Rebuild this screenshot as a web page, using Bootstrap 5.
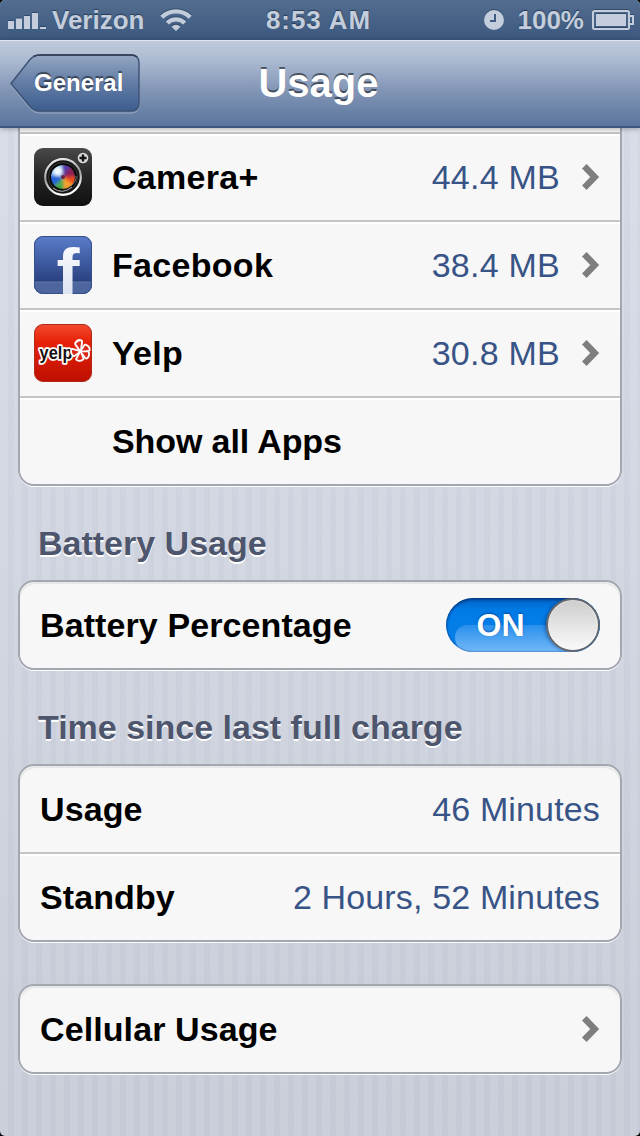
<!DOCTYPE html>
<html lang="en">
<head>
<meta charset="utf-8">
<meta name="viewport" content="width=device-width, initial-scale=1">
<title>Usage</title>
<link href="https://cdn.jsdelivr.net/npm/bootstrap@5.3.0/dist/css/bootstrap.min.css" rel="stylesheet">
<style>
html{background:#000}
body{font-family:"Liberation Sans",Arial,sans-serif;background:#000;overflow:hidden}
.phone{width:640px;height:1136px;border-radius:5px;overflow:hidden;
  background:repeating-linear-gradient(90deg,rgba(255,255,255,.05) 0 8px,rgba(120,135,165,.035) 8px 14px),linear-gradient(#d9dde8,#d0d4df 55%,#c7ccd7)}
.status{height:40px;background:linear-gradient(#526d8f,#3c587f);color:#c3cddb;font-size:26px;font-weight:700;line-height:40px;text-shadow:0 -1px 1px rgba(20,35,60,.65)}
.status svg,.titlebar svg,.cell svg{display:block;flex:none}
.status svg{filter:drop-shadow(0 -1px 0 rgba(20,35,60,.4))}
.side{width:200px}
.clock-text{letter-spacing:.9px;margin-right:3px}
.wifi{margin-left:16px}
.percent{margin:0 8px 0 13px}
.battery{margin-right:6px}
.titlebar{height:88px;padding:0 10px;border-top:1px solid #dfe6ef;border-bottom:2px solid #3d5982;background:linear-gradient(#bfcbdc,#a9b8d0 25%,#8295b6 58%,#5a759d);box-shadow:0 1px 5px rgba(0,0,0,.3);z-index:2}
.back{width:131px;height:60px}
.back span{left:24px;top:0;line-height:58px;font-size:24px;color:#fff;text-shadow:0 -2px 1px rgba(0,0,0,.5)}
.titletext{font-size:40px;line-height:84px;padding-right:3px;color:#fff;text-shadow:0 -2px 0 rgba(0,0,0,.5)}
.content-area{padding:0 18px;margin-top:-20px}
.group{border:2px solid #a3a7b0;border-radius:16px;overflow:hidden;background:#f7f7f7;box-shadow:0 1px 0 rgba(255,255,255,.9)}
.group>.cell{height:88px;padding:0 20px;background:#f7f7f7;border:0;border-top:2px solid #c5c5c7;color:#000;font-size:34px;line-height:40px;letter-spacing:.1px;box-shadow:inset 0 2px 0 #fff}
.group>.cell:first-child{height:86px;border-top:0;box-shadow:inset 0 2px 1px #e6e6e9}
.group>.cell.lead-in{height:22px;box-shadow:none}
.group>.cell.app{padding-left:14px}
.group>.cell.rest{padding-left:92px;letter-spacing:-.1px}
.name-app{margin-left:20px;letter-spacing:.3px}
.amount{color:#385487;letter-spacing:.15px}
.amount-app{margin-right:22px;letter-spacing:.25px}
.heading{height:94px;padding:20px 0 0 20px;line-height:74px;font-size:34px;color:#4d566d;text-shadow:0 2px 0 #fff}
.gap-block{height:42px}
.toggle{width:154px;height:54px;border-radius:27px;overflow:hidden;background:linear-gradient(#0064c8,#007be6 22%,#0a80e8)}
.toggle .gloss{left:9px;right:0;top:27px;bottom:0;border-radius:22px 0 0 22px/22px 0 0 27px;background:linear-gradient(#2990ed,#72b8f8)}
.toggle .on{left:30.5px;top:0;line-height:54px;font-size:32px;color:#fff;text-shadow:0 -1px 2px rgba(0,60,140,.7)}
.toggle .edge{inset:0;border-radius:27px;box-shadow:inset 0 2px 3px rgba(0,30,90,.6),inset 0 0 2px rgba(0,40,100,.7)}
.toggle .knob{right:0;top:0;width:54px;height:54px;border-radius:50%;border:2px solid #63676c;background:linear-gradient(#cdcdcd,#fafafa);background-clip:border-box;box-shadow:-2px 0 3px rgba(0,40,100,.35),inset 0 0 2px #fff}
</style>
</head>
<body>
<svg width="0" height="0" class="position-absolute" aria-hidden="true">
  <symbol id="chevron" viewBox="0 0 18 26"><path d="M2.300 2.300 12.700 13 2.300 23.700" fill="none" stroke="#7e7e7e" stroke-width="6.400"/></symbol>
</svg>
<div class="phone d-flex flex-column">
  <div class="status d-flex align-items-center justify-content-between flex-shrink-0">
    <div class="side d-flex align-items-center">
      <svg class="ms-2" width="38" height="18" viewBox="0 0 38 18" fill="#c3cddb"><path d="M0 10h6v8H0zM8 7.500h6V18H8zM16 5h6v13h-6zM24 2h6v16h-6zM32 16h6v2h-6z"/></svg>
      <span style="margin-left:6px">Verizon</span>
      <svg class="wifi" width="32" height="24" viewBox="0 0 32 24" fill="none" stroke="#c3cddb"><path d="M1.800 9.300a20 20 0 0 1 28.400 0M7.300 15a12.300 12.300 0 0 1 17.400 0" stroke-width="4.300"/><path d="M11.500 18.800q4.500-4 9 0L16 23z" fill="#c3cddb" stroke="none"/></svg>
    </div>
    <div class="clock-text">8:53 AM</div>
    <div class="side d-flex align-items-center justify-content-end">
      <svg width="20" height="20" viewBox="0 0 20 20"><circle cx="10" cy="10" r="10" fill="#c3cddb"/><path d="M11 4v7H6" fill="none" stroke="#405c84" stroke-width="2"/></svg>
      <span class="percent">100%</span>
      <svg class="battery" width="42" height="20" viewBox="0 0 42 20"><rect x="1" y="1" width="36" height="18" rx="1.500" fill="none" stroke="#c3cddb" stroke-width="2"/><path d="M4 4h30v12H4z" fill="#c3cddb"/><path d="M37 6h4v8h-4" fill="none" stroke="#c3cddb" stroke-width="2"/></svg>
    </div>
  </div>

  <header class="titlebar position-relative d-flex align-items-center flex-shrink-0">
    <a class="back position-relative d-block fw-bold text-decoration-none" href="#">
      <svg width="131" height="60" viewBox="0 0 131 60">
        <defs><linearGradient id="bk" x2="0" y2="1"><stop stop-color="#94a6c2"/><stop offset=".5" stop-color="#627ca5"/><stop offset="1" stop-color="#3c5d8f"/></linearGradient></defs>
        <path d="M1 31 20 6.500Q24 2 29 2H121Q129 2 129 10V51Q129 59 121 59H29Q24 59 20 54.500Z" fill="none" stroke="#b8c6da" stroke-opacity=".6"/>
        <path d="M1 29.500 20 5.500Q24 1 30 1H121Q129 1 129 9V49Q129 57 121 57H30Q24 57 20 52.500Z" fill="url(#bk)" stroke="#3f5376" stroke-width="1.500"/>
        <path d="M23.500 2.500Q26 1 30 1H121Q125 1 127 3" fill="none" stroke="#303d52" stroke-width="1.600"/>
      </svg>
      <span class="position-absolute">General</span>
    </a>
    <h1 class="titletext position-absolute start-0 end-0 top-0 m-0 text-center fw-bold pe-none">Usage</h1>
  </header>

  <main class="content-area flex-grow-1">
    <div class="list-group group">
      <div class="list-group-item cell lead-in"></div>
      <div class="list-group-item cell app d-flex align-items-center">
        <svg width="58" height="58" viewBox="0 0 58 58">
          <defs>
            <linearGradient id="cb" x2="0" y2="1"><stop stop-color="#494949"/><stop offset=".5" stop-color="#242424"/><stop offset="1" stop-color="#111"/></linearGradient>
            <linearGradient id="ring" x2=".3" y2="1"><stop stop-color="#fff"/><stop offset=".55" stop-color="#999"/><stop offset="1" stop-color="#fff"/></linearGradient>
            <filter id="soft" x="-20%" y="-20%" width="140%" height="140%"><feGaussianBlur stdDeviation="1.500"/></filter>
            <clipPath id="lens"><circle cx="29" cy="29" r="12"/></clipPath>
          </defs>
          <rect width="58" height="58" rx="9" fill="url(#cb)"/>
          <circle cx="29" cy="29" r="17.800" fill="#151515" stroke="url(#ring)" stroke-width="2.200"/>
          <circle cx="29" cy="29" r="14.500" fill="#080808" stroke="#444" stroke-width=".8"/>
          <g clip-path="url(#lens)"><g filter="url(#soft)">
            <circle cx="29" cy="29" r="13" fill="#302261"/>
            <path d="M29 29 14 27 19 15 28 15Z" fill="#8cc8fb"/>
            <path d="M29 29 28 14 38 17Z" fill="#5a3aa8"/><path d="M29 29 38 17 43 29Z" fill="#8d2056"/>
            <path d="M29 29 43 28 41 39Z" fill="#ed481d"/><path d="M29 29 41 38 29 43Z" fill="#f7a030"/>
            <path d="M29 29 30 43 18 39Z" fill="#49a94a"/><path d="M29 29 18 40 14 27Z" fill="#2461d5"/>
            <circle cx="24" cy="23" r="4.500" fill="#f2faff"/>
          </g><circle cx="29" cy="29" r="2" fill="#6a2040"/></g>
          <path d="M19 40Q28 47 38 39" fill="none" stroke="#aaa"/><path d="M37 38Q43 33 42 28" fill="none" stroke="#777"/>
          <circle cx="49" cy="10" r="5.300" fill="#d9d9d9"/><path d="M49 6.500v7M45.500 10h7" stroke="#111" stroke-width="2.400"/>
        </svg>
        <span class="name-app fw-bold">Camera+</span>
        <span class="amount amount-app ms-auto">44.4 MB</span>
        <svg width="18" height="26"><use href="#chevron"/></svg>
      </div>
      <div class="list-group-item cell app d-flex align-items-center">
        <svg class="overflow-visible" width="58" height="58" viewBox="0 0 58 58">
          <defs>
            <linearGradient id="fb" x2="0" y2="1"><stop stop-color="#5a7dcb"/><stop offset=".78" stop-color="#2a4180"/></linearGradient>
            <linearGradient id="ff" x2="0" y2="1"><stop stop-color="#fff"/><stop offset="1" stop-color="#d5dced"/></linearGradient>
            <clipPath id="tile"><rect width="58" height="58" rx="9"/></clipPath>
          </defs>
          <g clip-path="url(#tile)"><path d="M0 0h58v58H0z" fill="url(#fb)"/><path d="M0 46h58v12H0z" fill="#4d669e"/><path d="M0 46h58" stroke="#6379ab"/></g>
          <rect x=".5" y=".5" width="57" height="57" rx="8.500" fill="none" stroke="#354f8d"/>
          <text transform="translate(22.500 58) scale(1.080 1)" font-family="Liberation Sans" font-weight="700" font-size="64" fill="url(#ff)">f</text>
        </svg>
        <span class="name-app fw-bold">Facebook</span>
        <span class="amount amount-app ms-auto">38.4 MB</span>
        <svg width="18" height="26"><use href="#chevron"/></svg>
      </div>
      <div class="list-group-item cell app d-flex align-items-center">
        <svg width="58" height="58" viewBox="0 0 58 58">
          <defs>
            <linearGradient id="yl" x2="0" y2="1"><stop stop-color="#f34a30"/><stop offset=".3" stop-color="#e62207"/><stop offset="1" stop-color="#bd0f02"/></linearGradient>
            <path id="petal" d="M0-1.600-2.800-7Q0-9.500 2.800-8Z"/>
            <g id="burst"><use href="#petal" transform="rotate(-12) scale(1 1.200)"/><use href="#petal" transform="rotate(60)"/><use href="#petal" transform="rotate(118)"/><use href="#petal" transform="rotate(185)"/><use href="#petal" transform="rotate(262)"/></g>
          </defs>
          <rect x=".5" y=".5" width="57" height="57" rx="8.500" fill="url(#yl)" stroke="#b02a18"/>
          <text x="5.500" y="35" font-family="Liberation Sans" font-weight="700" font-size="18" textLength="33" lengthAdjust="spacingAndGlyphs" fill="#161010" stroke="#fff" stroke-width="3.600" stroke-linejoin="round" paint-order="stroke">yelp</text>
          <g transform="translate(46.500 27.500)"><use href="#burst" fill="#fff" stroke="#fff" stroke-width="3.600" stroke-linejoin="round"/><use href="#burst" fill="#d92b1a"/></g>
        </svg>
        <span class="name-app fw-bold">Yelp</span>
        <span class="amount amount-app ms-auto">30.8 MB</span>
        <svg width="18" height="26"><use href="#chevron"/></svg>
      </div>
      <div class="list-group-item cell rest d-flex align-items-center"><span class="fw-bold">Show all Apps</span></div>
    </div>

    <h2 class="heading m-0 fw-bold">Battery Usage</h2>
    <div class="list-group group">
      <div class="list-group-item cell d-flex align-items-center">
        <span class="fw-bold">Battery Percentage</span>
        <div class="toggle position-relative ms-auto">
          <span class="gloss position-absolute"></span><span class="edge position-absolute"></span>
          <span class="on position-absolute fw-bold">ON</span><span class="knob position-absolute"></span>
        </div>
      </div>
    </div>

    <h2 class="heading m-0 fw-bold">Time since last full charge</h2>
    <div class="list-group group">
      <div class="list-group-item cell d-flex align-items-center"><span class="fw-bold">Usage</span><span class="amount ms-auto">46 Minutes</span></div>
      <div class="list-group-item cell d-flex align-items-center"><span class="fw-bold">Standby</span><span class="amount ms-auto">2 Hours, 52 Minutes</span></div>
    </div>

    <div class="gap-block"></div>
    <div class="list-group group">
      <div class="list-group-item cell d-flex align-items-center"><span class="fw-bold">Cellular Usage</span><svg class="ms-auto" width="18" height="26"><use href="#chevron"/></svg></div>
    </div>
  </main>
</div>
<script src="https://cdn.jsdelivr.net/npm/bootstrap@5.3.0/dist/js/bootstrap.bundle.min.js"></script>
</body>
</html>
